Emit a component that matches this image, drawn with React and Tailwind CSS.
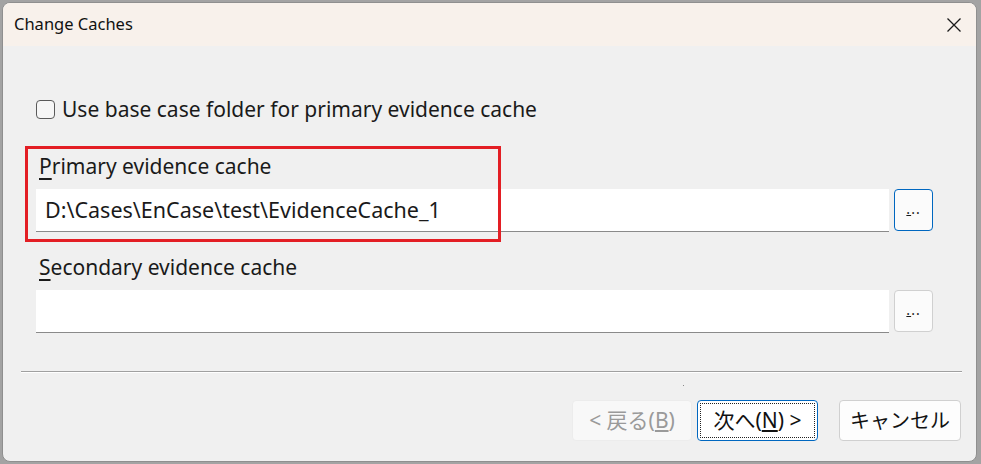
import React from 'react';

const ui = { fontFamily: '"Noto Sans", "Noto Sans CJK JP", sans-serif' };

const BrowseButton = ({ focused }) => (
  <button
    className={`w-[39px] h-[42px] rounded-[4px] bg-[#fbfbfb] flex items-end justify-center pb-[14px] ${
      focused ? 'border-[1.5px] border-[#0067c0]' : 'border border-[#d0d0d0]'
    }`}
  >
    <span className="text-[14px] leading-none tracking-[1px] text-[#1a1a1a]">
      <span className="underline">.</span>..
    </span>
  </button>
);

const App = () => {
  return (
    <div className="w-[981px] h-[464px] bg-[#a3a3a3] pl-[2px] pt-[2px] overflow-hidden" style={ui}>
      <div className="w-[975px] h-[460px] rounded-[8px] border border-[#8f8f8f] bg-[#f0f0f0] overflow-hidden flex flex-col relative">
        {/* Title bar */}
        <div className="h-[43px] bg-[#f8f1eb] flex items-center justify-between pl-[11px] pr-[14px] shrink-0">
          <span className="text-[16.5px] text-[#111]">Change Caches</span>
          <svg width="16" height="16" viewBox="0 0 16 16">
            <path d="M1.5 1.5 L14.5 14.5 M14.5 1.5 L1.5 14.5" stroke="#1a1a1a" strokeWidth="1.3" />
          </svg>
        </div>

        {/* Body */}
        <div className="flex flex-col pl-[33px] pr-[43px]">
          <label className="flex items-center gap-[7px] mt-[50px] h-[26px]">
            <span className="w-[19px] h-[19px] rounded-[4px] border border-[#5a5a5a] bg-[#f6f6f6]" />
            <span className="text-[21px] text-[#1a1a1a] leading-[26px]">Use base case folder for primary evidence cache</span>
          </label>

          <div className="mt-[31px] pl-[3px] text-[21px] leading-[27px] text-[#1a1a1a]">
            <span className="underline underline-offset-[4px]">P</span>rimary evidence cache
          </div>
          <div className="mt-[9px] flex gap-[5px]">
            <div className="w-[853px] h-[43px] bg-white border-b-[1.5px] border-[#8a8a8a] flex items-center pl-[9px]">
              <span className="text-[21.5px] text-[#1a1a1a]">D:\Cases\EnCase\test\EvidenceCache_1</span>
            </div>
            <BrowseButton focused />
          </div>

          <div className="mt-[22px] pl-[3px] text-[21px] leading-[27px] text-[#1a1a1a]">
            <span className="underline underline-offset-[4px]">S</span>econdary evidence cache
          </div>
          <div className="mt-[9px] flex gap-[5px]">
            <div className="w-[853px] h-[43px] bg-white border-b-[1.5px] border-[#8a8a8a]" />
            <BrowseButton />
          </div>
        </div>

        <div className="mt-[38px] ml-[18px] w-[941px] border-t border-[#a0a0a0] border-b border-b-white" />
        <div className="ml-[680px] mt-[12px] w-[1px] h-[1px] bg-[#8a8a8a]" />

        <div className="mt-[14px] flex pl-[569px] text-[21px] leading-none">
          <button className="w-[120px] h-[41px] rounded-[4px] bg-[#f8f8f8] border border-[#ececec] text-[#9a9a9a] flex items-center justify-center">
            &lt; 戻る(<span className="underline">B</span>)
          </button>
          <button className="ml-[5px] w-[121px] h-[41px] rounded-[4px] border-[1.5px] border-[#0067c0] bg-white p-[2px]">
            <span className="w-full h-full border border-dotted border-[#222] flex items-center justify-center text-[#111]">
              次へ(<span className="underline">N</span>) &gt;
            </span>
          </button>
          <button className="ml-[21px] w-[122px] h-[41px] rounded-[4px] bg-[#fdfdfd] border border-[#d0d0d0] text-[20px] text-[#111] flex items-center justify-center">
            キャンセル
          </button>
        </div>

        {/* annotation highlight */}
        <div className="absolute left-[22px] top-[143px] w-[476px] h-[96px] border-[3px] border-[#e31e24] pointer-events-none" />
      </div>
    </div>
  );
};

export default App;
